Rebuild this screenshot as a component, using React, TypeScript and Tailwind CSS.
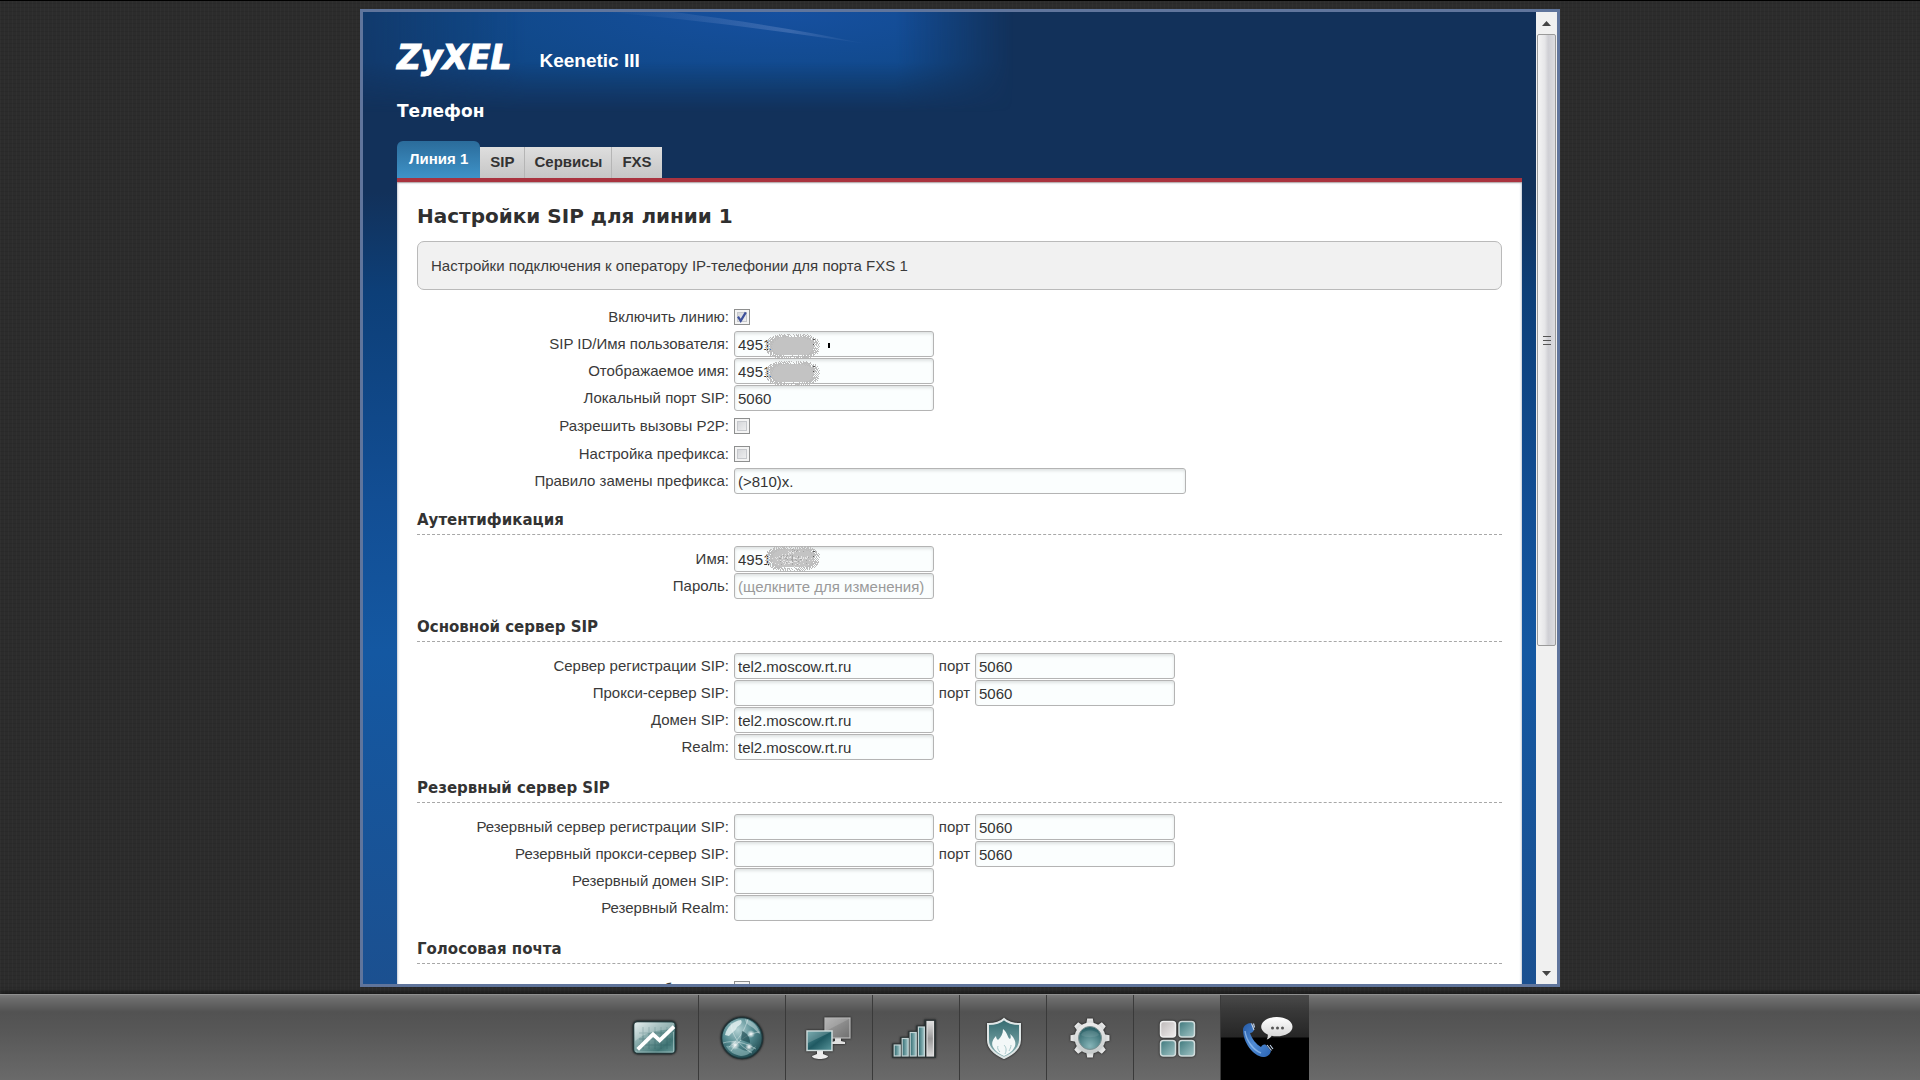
import React, { useState } from "react";

const sans = "font-['Liberation_Sans',Arial,sans-serif]";
const wide = "font-['DejaVu_Sans',Verdana,sans-serif]";

/* ---------- form pieces ---------- */

function Row({ id, label, children, tall = false }: { id: string; label: string; children: React.ReactNode; tall?: boolean }) {
  return (
    <div className={tall ? "flex h-7 items-center" : "flex h-[27px] items-start"}>
      <label htmlFor={id} className="mr-[5px] w-[312px] shrink-0 whitespace-nowrap text-right leading-[26px]">
        {label}
      </label>
      {children}
    </div>
  );
}

function Field({ id, value = "", placeholder, size = "w-[200px]", type = "text" }: { id: string; value?: string; placeholder?: string; size?: string; type?: string }) {
  const [text, setText] = useState(value);
  return (
    <input
      id={id}
      type={type}
      value={text}
      placeholder={placeholder}
      onChange={(e) => setText(e.target.value)}
      className={`${size} h-[26px] rounded-[3px] border border-[#b4b4b4] bg-[#fbfefe] px-[3px] leading-6 text-[#333] shadow-[inset_0_2px_3px_#dfe3e3] outline-none placeholder:text-[#9a9a9a]`}
    />
  );
}

function PortField({ id }: { id: string }) {
  return (
    <>
      <label htmlFor={id} className="w-[41px] text-center leading-[26px]">порт</label>
      <Field id={id} value="5060" />
    </>
  );
}

function Check({ id, checked = false }: { id: string; checked?: boolean }) {
  const [on, setOn] = useState(checked);
  return (
    <span className="relative flex size-4">
      <input
        id={id}
        type="checkbox"
        checked={on}
        onChange={() => setOn(!on)}
        className="size-4 appearance-none border border-[#8e8f8f] bg-gradient-to-br from-[#cdcfd3] to-[#f6f6f6] shadow-[inset_0_0_0_2px_#f4f4f4,inset_0_0_0_3px_#c6c8cc]"
      />
      {on && (
        <svg viewBox="0 0 16 16" className="pointer-events-none absolute inset-0 size-4">
          <path d="M4 7.6l2.7 4.2L11.8 3.4" fill="none" stroke="#3c4f9b" strokeWidth="2.2" />
        </svg>
      )}
    </span>
  );
}

function Smudge({ seed, holes = false }: { seed: number; holes?: boolean }) {
  const dots = Array.from({ length: 420 }, (_, i) => {
    const a = i * 2.39996 + seed;
    const c = Math.cos(a);
    const s = Math.sin(a);
    const r = 0.78 + (((i * 37 + seed * 11) % 29) / 29) * 0.27;
    return [
      Math.round(30 + Math.sign(c) * Math.pow(Math.abs(c), 0.7) * 26 * r),
      Math.round(13 + Math.sign(s) * Math.pow(Math.abs(s), 0.8) * 12 * r),
    ];
  });
  return (
    <svg viewBox="0 0 60 28" className={holes ? "pointer-events-none absolute -top-px left-7 h-7 w-[60px]" : "pointer-events-none absolute left-7 top-0.5 h-7 w-[60px]"} shapeRendering="crispEdges">
      <rect x="8" y="4" width="44" height="18" rx="9" fill="#c3c3c3" />
      {dots.map(([x, y], i) => (
        <rect key={i} x={x} y={y} width="1" height="1" fill="#bdbdbd" />
      ))}
      {holes &&
        dots.slice(0, 150).map(([x, y], i) => (
          <rect key={i} x={Math.round(30 + (x - 30) * ((i % 9) / 10))} y={Math.round(13 + (y - 13) * ((i % 7) / 8))} width="1" height="1" fill={i % 3 ? "#e6e6e6" : "#a5a5a5"} />
        ))}
      <path d="M51 6h2v1h-2zM51 11h1v1h-1z" fill="#555" />
    </svg>
  );
}

function Section({ title, children }: { title: string; children: React.ReactNode }) {
  return (
    <section>
      <h3 className={`${wide} flex h-[42px] items-end border-b border-dashed border-[#a8a8a8] pb-1 text-[15px] font-bold leading-5 text-[#333]`}>{title}</h3>
      <div className="pt-[11px]">{children}</div>
    </section>
  );
}

/* ---------- bottom bar icons ---------- */

const icon = "size-12 overflow-visible drop-shadow-[0_0_1px_#111]";

function ChartIcon() {
  return (
    <svg viewBox="0 0 48 48" className={icon}>
      <defs>
        <linearGradient id="ch" x1="0" y1="0" x2="1" y2="1">
          <stop offset="0" stopColor="#e3eded" />
          <stop offset=".35" stopColor="#8fb0b0" />
          <stop offset=".75" stopColor="#3f7474" />
          <stop offset="1" stopColor="#6c9c9c" />
        </linearGradient>
      </defs>
      <rect x="2.5" y="7.5" width="42" height="32" rx="4" fill="url(#ch)" stroke="#253638" strokeWidth="1.5" />
      <path d="M12 13v22M18 13v22M24 13v22M30 13v22M36 13v22M8 19h32M8 25h32M8 31h32" stroke="#2f5f62" strokeWidth="1" opacity=".4" />
      <path d="M4 9h39v6C28 16 14 18 4 27z" fill="#fff" opacity=".25" />
      <path d="M5 36.5V38h37.5V18" fill="none" stroke="#b6d0d0" strokeWidth="1" opacity=".6" />
      <path d="M6.7 35.3L22 20.3l6.7 6L43 12.7" fill="none" stroke="#fff" strokeWidth="3.8" />
    </svg>
  );
}

function GlobeIcon() {
  return (
    <svg viewBox="0 0 48 48" className={icon}>
      <defs>
        <radialGradient id="gl" cx=".4" cy=".3" r=".75">
          <stop offset="0" stopColor="#b4d2d4" />
          <stop offset=".5" stopColor="#538a90" />
          <stop offset="1" stopColor="#1d474d" />
        </radialGradient>
        <radialGradient id="gf">
          <stop offset="0" stopColor="#fff" />
          <stop offset="1" stopColor="#fff" stopOpacity="0" />
        </radialGradient>
      </defs>
      <circle cx="24" cy="24" r="20.5" fill="url(#gl)" stroke="#1f3438" strokeWidth="1.5" />
      <path d="M7 21c2-8 8-14 16-15 2 3-1 5-4 7-1 4-5 5-8 9z" fill="#e6f2f2" opacity=".8" />
      <path d="M27 5c8 2 13 7 15 15-3-1-5-6-10-8-3-2-5-4-5-7z" fill="#cfe2e3" opacity=".5" />
      <path d="M8 32c6-1 11 1 17 4 5 2 9-1 13-4-3 6-9 10-15 10-6-1-12-4-15-10z" fill="#9cc6c8" opacity=".55" />
      <path d="M5 29c9-3 22-1 33 6M13 9c1 12 7 22 21 30M30 5c-3 10-8 20-19 28M42 18c-9 1-19 5-29 19" fill="none" stroke="#e8f5f5" strokeWidth="1" opacity=".45" />
      <path d="M24 17c5 2 8 6 8 12l-9-3z" fill="#123f46" opacity=".6" />
      <circle cx="17" cy="31" r="5" fill="url(#gf)" />
      <circle cx="31" cy="33" r="4" fill="url(#gf)" />
      <circle cx="33" cy="20" r="4" fill="url(#gf)" />
    </svg>
  );
}

function MonitorsIcon() {
  return (
    <svg viewBox="0 0 48 48" className={icon}>
      <defs>
        <linearGradient id="mg" x1="0" y1="0" x2="1" y2="1">
          <stop offset="0" stopColor="#a9a9a9" />
          <stop offset=".5" stopColor="#8b8b8b" />
          <stop offset="1" stopColor="#707070" />
        </linearGradient>
        <linearGradient id="mt" x1="0" y1="0" x2="1" y2="1">
          <stop offset="0" stopColor="#5d9ba0" />
          <stop offset=".5" stopColor="#1f5962" />
          <stop offset="1" stopColor="#5a979c" />
        </linearGradient>
      </defs>
      <path d="M30 24h6v3l4 1v2H27v-2l3-1z" fill="#e0e0e0" />
      <rect x="20" y="4" width="25" height="20" fill="url(#mg)" stroke="#bdbdbd" strokeWidth="1.2" />
      <path d="M21 5h23L21 17z" fill="#fff" opacity=".15" />
      <path d="M12 37h6v3l5 2c0 2-4 3-8 3s-8-1-8-3l5-2z" fill="#ececec" />
      <rect x="2" y="17" width="25" height="19.5" fill="url(#mt)" stroke="#cfdcdc" strokeWidth="1.5" />
      <path d="M3 18h23L3 29z" fill="#fff" opacity=".18" />
    </svg>
  );
}

function SignalIcon() {
  return (
    <svg viewBox="0 0 48 48" className={icon}>
      <defs>
        <linearGradient id="sg" x1="0" y1="0" x2="1" y2="0">
          <stop offset="0" stopColor="#2f6a70" />
          <stop offset="1" stopColor="#a5c8ca" />
        </linearGradient>
        <linearGradient id="sw" x1="0" y1="0" x2="0" y2="1">
          <stop offset="0" stopColor="#e0e0e0" />
          <stop offset=".5" stopColor="#999" />
          <stop offset="1" stopColor="#d8d8d8" />
        </linearGradient>
      </defs>
      <path d="M0 29.5h8v-6.500h8v-6h8v-5.500h8V5.500h12V44H0z" fill="#2b3436" opacity=".7" />
      <g stroke="#c3d4d5" strokeWidth="1.2">
        <rect x="2.2" y="31" width="6" height="11" fill="url(#sg)" />
        <rect x="10.2" y="24.5" width="6" height="17.5" fill="url(#sg)" />
        <rect x="18.2" y="18.5" width="6" height="23.5" fill="url(#sg)" />
        <rect x="26.4" y="13" width="6" height="29" fill="url(#sg)" />
        <rect x="35" y="7.5" width="6.5" height="34.5" fill="url(#sw)" stroke="#dedede" />
      </g>
    </svg>
  );
}

function ShieldIcon() {
  return (
    <svg viewBox="0 0 48 48" className={icon}>
      <defs>
        <linearGradient id="sh" x1="0" y1="0" x2="0" y2="1">
          <stop offset="0" stopColor="#32696e" />
          <stop offset="1" stopColor="#8fb6b8" />
        </linearGradient>
      </defs>
      <path d="M25 5c4 4 9 5 16 5v16c0 8-7 14-16 18C16 40 9 34 9 26V10c7 0 12-1 16-5z" fill="url(#sh)" stroke="#dfe6e6" strokeWidth="2" />
      <path d="M24 15c5 4 4 8 7 10 1-1 1-3 0-5 5 4 7 10 4 14-2 4-6 6-10 8-5-2-9-5-11-9-2-4 0-8 3-11 0 2 1 3 2 4 3-3 5-6 5-11z" fill="#f3f8f8" />
      <path d="M25 31c2 2 3 5 1 9M19 32c-1 2 0 4 2 6M32 31c0 2-1 4-2 6" fill="none" stroke="#a9c9cb" strokeWidth="1" />
    </svg>
  );
}

function GearIcon() {
  return (
    <svg viewBox="0 0 48 48" className={icon}>
      <defs>
        <radialGradient id="gr" cx=".5" cy=".85" r=".85">
          <stop offset="0" stopColor="#86b5b8" />
          <stop offset="1" stopColor="#255b62" />
        </radialGradient>
        <linearGradient id="gw" x1="0" y1="0" x2="0" y2="1">
          <stop offset="0" stopColor="#ececec" />
          <stop offset="1" stopColor="#c5caca" />
        </linearGradient>
      </defs>
      <g fill="url(#gw)">
        {[0, 45, 90, 135, 180, 225, 270, 315].map((a) => (
          <path key={a} d="M20 11l1.200-6.500h5.600L28 11z" transform={`rotate(${a} 24 24)`} />
        ))}
        <circle cx="24" cy="24" r="15.5" />
      </g>
      <circle cx="24" cy="24" r="11.5" fill="url(#gr)" stroke="#7d9293" strokeWidth="1" />
      <path d="M15 21c2-6 16-6 18 0-4 3-14 3-18 0z" fill="#fff" opacity=".1" />
    </svg>
  );
}

function TilesIcon() {
  return (
    <svg viewBox="0 0 48 48" className={icon}>
      <defs>
        <linearGradient id="tt" x1="0" y1="0" x2="1" y2="1">
          <stop offset="0" stopColor="#3f797d" />
          <stop offset="1" stopColor="#a3c5c6" />
        </linearGradient>
        <linearGradient id="tw" x1="0" y1="0" x2="1" y2="1">
          <stop offset="0" stopColor="#bdb8b8" />
          <stop offset="1" stopColor="#f0eded" />
        </linearGradient>
      </defs>
      <g stroke="#d0dcdc" strokeWidth="1.5">
        <rect x="7.5" y="7.5" width="15" height="15.5" rx="3" fill="url(#tw)" stroke="#eee" />
        <rect x="26" y="7.5" width="15.5" height="15.5" rx="3" fill="url(#tt)" />
        <rect x="7.5" y="26.5" width="15" height="15.5" rx="3" fill="url(#tt)" />
        <rect x="26" y="26.5" width="15.5" height="15.5" rx="3" fill="url(#tt)" />
      </g>
    </svg>
  );
}

function PhoneIcon() {
  return (
    <svg viewBox="0 0 48 48" className="size-12 overflow-visible">
      <defs>
        <linearGradient id="ph" x1="0" y1="0" x2="1" y2="1">
          <stop offset="0" stopColor="#2459a5" />
          <stop offset=".5" stopColor="#4f8bd4" />
          <stop offset="1" stopColor="#2a63b3" />
        </linearGradient>
        <linearGradient id="bb" x1="0" y1="0" x2="0" y2="1">
          <stop offset="0" stopColor="#fff" />
          <stop offset="1" stopColor="#d0d0d0" />
        </linearGradient>
      </defs>
      <path d="M2 16c0-4 4-7 8-7l3 7c-1 2-2 3-4 3 2 6 6 11 11 14 1-2 3-3 5-2l5 6c-1 4-4 6-8 6C12 42 2 28 2 16z" fill="url(#ph)" />
      <path d="M4 17c1 9 8 19 16 22" fill="none" stroke="#9cc4f2" strokeWidth="1.5" opacity=".7" />
      <path d="M10.5 9.500l2.500 6.500M12.500 9.500l1 4M26 31l4.500 5.500M29 31l3 4" stroke="#c4d6ee" strokeWidth="1.1" />
      <path d="M35.7 3c9 0 15.8 4.300 15.800 9.700s-6.800 9.600-15.800 9.600c-2 0-3.600-.2-5-.6-1 1.800-2.700 3-5 3.900 1-1.600 1.400-3.300 1-5.200-4-1.800-6.500-4.500-6.500-7.700C20.200 7.300 27 3 35.700 3z" fill="url(#bb)" />
      <g fill="#555">
        <circle cx="31.5" cy="14" r="1.5" />
        <circle cx="36.5" cy="14" r="1.5" />
        <circle cx="41.5" cy="14" r="1.5" />
      </g>
    </svg>
  );
}

const apps = [
  { name: "Системный монитор", Icon: ChartIcon },
  { name: "Интернет", Icon: GlobeIcon },
  { name: "Домашняя сеть", Icon: MonitorsIcon },
  { name: "Сеть Wi-Fi", Icon: SignalIcon },
  { name: "Безопасность", Icon: ShieldIcon },
  { name: "Система", Icon: GearIcon },
  { name: "Приложения", Icon: TilesIcon },
  { name: "Телефон", Icon: PhoneIcon, active: true },
];

/* ---------- page ---------- */

export default function App() {
  return (
    <div
      className={`${sans} flex h-screen flex-col border-t border-black bg-[#2c2c2c] bg-[repeating-linear-gradient(0deg,rgba(0,0,0,0.07)_0_1px,transparent_1px_4px),repeating-linear-gradient(90deg,rgba(255,255,255,0.02)_0_1px,transparent_1px_4px)] text-[15px] text-[#3a3a3a]`}
    >
      <div className="flex min-h-0 flex-1 justify-center pb-[7px] pt-2">
        <div className="flex w-full max-w-[1200px] border-[3px] border-[#60759c] bg-[#12315a]">
          <div className="relative min-w-0 flex-1 overflow-hidden bg-[linear-gradient(180deg,#12315a_0px,#12315a_180px,#0d3f78_280px,#124e94_490px,#1458a2_640px,#1b5090_972px)]">
            <div className="absolute left-0 top-0 h-[100px] w-[650px] bg-[radial-gradient(ellipse_at_65%_0%,#1650a0_0%,#104888_55%,#123c72_100%)] [mask-composite:intersect] [mask-image:linear-gradient(90deg,rgba(0,0,0,0.5),black_25%,black_82%,transparent),linear-gradient(180deg,black_50%,transparent)]">
              <svg viewBox="0 0 650 100" className="size-full">
                <defs>
                  <linearGradient id="ray" x1="0" y1="0" x2="1" y2="0">
                    <stop offset="0" stopColor="#6f8fc8" stopOpacity="0" />
                    <stop offset=".7" stopColor="#6f8fc8" stopOpacity=".4" />
                    <stop offset="1" stopColor="#6f8fc8" stopOpacity="0" />
                  </linearGradient>
                </defs>
                <path d="M240 0C340 8 420 20 505 32 430 17 380 9 310 0z" fill="url(#ray)" />
              </svg>
            </div>

            <div className="relative pl-[34px] pr-3.5">
              <header className="flex h-[82px] items-center gap-7 pt-2.5 text-white">
                <span className={`${wide} text-[33px] font-bold italic leading-10 [-webkit-text-stroke:1px_white]`}>ZyXEL</span>
                <span className="pt-1.5 text-[19px] font-bold leading-6">Keenetic III</span>
              </header>
              <h1 className={`${wide} h-[47px] text-[17px] font-bold leading-[34px] text-white`}>Телефон</h1>
              <nav className="flex h-[37px] items-end text-[15px] font-bold text-[#333]">
                <button className="h-[37px] rounded-t-[6px] bg-gradient-to-b from-[#2b6c9b] to-[#3f93c8] px-3 pb-px text-white">Линия 1</button>
                <button className="h-[31px] border-r border-[#b5b5b5] bg-gradient-to-b from-[#dedede] to-[#c6c6c6] px-2.5">SIP</button>
                <button className="h-[31px] border-r border-[#b5b5b5] bg-gradient-to-b from-[#dedede] to-[#c6c6c6] px-[9px]">Сервисы</button>
                <button className="h-[31px] bg-gradient-to-b from-[#dedede] to-[#c6c6c6] px-2.5">FXS</button>
              </nav>

              <main className="min-h-[820px] border-t-4 border-[#a9333f] bg-white px-5 shadow-[inset_0_1px_1px_#b9a9a9,inset_0_0_3px_#8fa0b5]">
                <h2 className={`${wide} pb-[11px] pt-[21px] text-[20px] font-bold leading-[27px] text-[#2f2f2f]`}>Настройки SIP для линии 1</h2>
                <p className="rounded-[7px] border border-[#bababa] bg-[#f1f1f1] px-[13px] py-3 leading-[23px]">
                  Настройки подключения к оператору IP-телефонии для порта FXS 1
                </p>

                <form className="pt-[13px]">
                  <Row id="on" label="Включить линию:" tall>
                    <Check id="on" checked />
                  </Row>
                  <Row id="sipid" label="SIP ID/Имя пользователя:">
                    <div className="relative">
                      <Field id="sipid" value="4951" />
                      <Smudge seed={1} />
                      <span className="absolute left-[94px] top-3 h-[5px] w-0.5 bg-black" />
                    </div>
                  </Row>
                  <Row id="shown" label="Отображаемое имя:">
                    <div className="relative">
                      <Field id="shown" value="4951" />
                      <Smudge seed={5} />
                    </div>
                  </Row>
                  <Row id="lport" label="Локальный порт SIP:">
                    <Field id="lport" value="5060" />
                  </Row>
                  <Row id="p2p" label="Разрешить вызовы P2P:" tall>
                    <Check id="p2p" />
                  </Row>
                  <Row id="prefix" label="Настройка префикса:" tall>
                    <Check id="prefix" />
                  </Row>
                  <Row id="rule" label="Правило замены префикса:">
                    <Field id="rule" value="(>810)x." size="w-[452px]" />
                  </Row>

                  <div className="-mt-0.5">
                    <Section title="Аутентификация">
                      <Row id="login" label="Имя:">
                        <div className="relative">
                          <Field id="login" value="4951" />
                          <Smudge seed={9} holes />
                        </div>
                      </Row>
                      <Row id="pass" label="Пароль:">
                        <Field id="pass" placeholder="(щелкните для изменения)" type="password" />
                      </Row>
                    </Section>

                    <Section title="Основной сервер SIP">
                      <Row id="reg" label="Сервер регистрации SIP:">
                        <Field id="reg" value="tel2.moscow.rt.ru" />
                        <PortField id="regp" />
                      </Row>
                      <Row id="proxy" label="Прокси-сервер SIP:">
                        <Field id="proxy" />
                        <PortField id="proxyp" />
                      </Row>
                      <Row id="domain" label="Домен SIP:">
                        <Field id="domain" value="tel2.moscow.rt.ru" />
                      </Row>
                      <Row id="realm" label="Realm:">
                        <Field id="realm" value="tel2.moscow.rt.ru" />
                      </Row>
                    </Section>

                    <Section title="Резервный сервер SIP">
                      <Row id="reg2" label="Резервный сервер регистрации SIP:">
                        <Field id="reg2" />
                        <PortField id="reg2p" />
                      </Row>
                      <Row id="proxy2" label="Резервный прокси-сервер SIP:">
                        <Field id="proxy2" />
                        <PortField id="proxy2p" />
                      </Row>
                      <Row id="domain2" label="Резервный домен SIP:">
                        <Field id="domain2" />
                      </Row>
                      <Row id="realm2" label="Резервный Realm:">
                        <Field id="realm2" />
                      </Row>
                    </Section>

                    <Section title="Голосовая почта">
                      <Row id="mwi" label="Уведомлять о новых сообщениях:" tall>
                        <Check id="mwi" />
                      </Row>
                    </Section>
                  </div>
                </form>
              </main>
            </div>
          </div>

          <div className="flex w-[21px] shrink-0 flex-col bg-[#f0f0f0]">
            <button aria-label="Вверх" className="flex h-[22px] items-center justify-center">
              <svg viewBox="0 0 9 5" className="h-[5px] w-[9px]"><path d="M0 5L4.5 0 9 5z" fill="#444" /></svg>
            </button>
            <div className="flex-1">
              <div className="mx-px flex h-[66%] flex-col items-center justify-center gap-[3px] rounded-[2px] border border-[#9a9a9a] bg-[linear-gradient(90deg,#f4f4f4_0%,#e6e6e8_40%,#cfcfd4_60%,#dcdce0_100%)]">
                <i className="h-px w-2 bg-[#555]" />
                <i className="h-px w-2 bg-[#555]" />
                <i className="h-px w-2 bg-[#555]" />
              </div>
            </div>
            <button aria-label="Вниз" className="flex h-[22px] items-center justify-center">
              <svg viewBox="0 0 9 5" className="h-[5px] w-[9px]"><path d="M0 0L4.5 5 9 0z" fill="#444" /></svg>
            </button>
          </div>
        </div>
      </div>

      <footer className="flex h-[86px] shrink-0 justify-center border-t border-[#8f8f8f] bg-[linear-gradient(180deg,#7a7a7a_0px,#6c6c6c_4px,#525252_17px,#575757_35px,#6a6a6a_85px)] pl-px shadow-[0_-1px_5px_#111]">
        {apps.map(({ name, Icon, active }) => (
          <button
            key={name}
            aria-label={name}
            className={
              active
                ? "flex w-[88px] items-center justify-center bg-[linear-gradient(180deg,#4a4a4a_0px,#383838_16px,#262626_42px,#000_43px)]"
                : "flex w-[87px] items-center justify-center border-r border-[#3a3a3a]"
            }
          >
            <Icon />
          </button>
        ))}
      </footer>
    </div>
  );
}
